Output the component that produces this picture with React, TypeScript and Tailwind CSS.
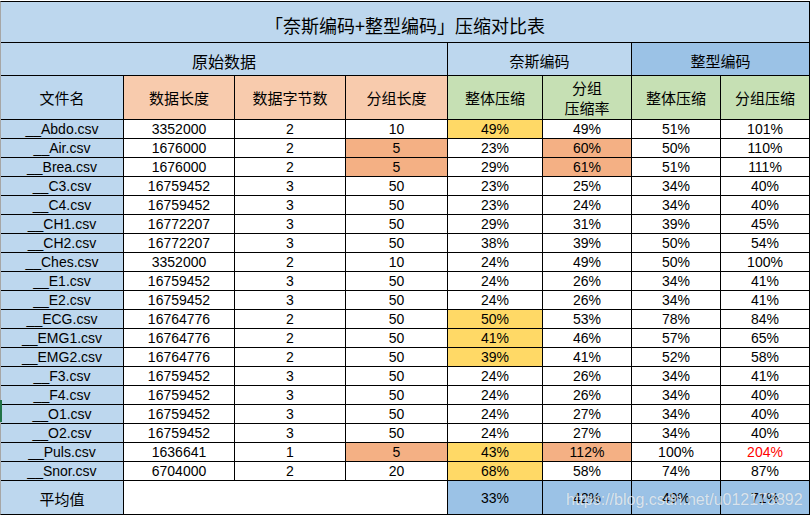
import React from 'react'

type Tone = 'y' | 'o' | undefined

type Row = {
  name: string
  len: string
  bytes: string
  group: string
  groupTone?: Tone
  niceAll: string
  niceAllTone?: Tone
  niceGroup: string
  niceGroupTone?: Tone
  intAll: string
  intGroup: string
  red?: boolean
}

const rows: Row[] = [
  { name: '__Abdo.csv', len: '3352000', bytes: '2', group: '10', niceAll: '49%', niceAllTone: 'y', niceGroup: '49%', intAll: '51%', intGroup: '101%' },
  { name: '__Air.csv', len: '1676000', bytes: '2', group: '5', groupTone: 'o', niceAll: '23%', niceGroup: '60%', niceGroupTone: 'o', intAll: '50%', intGroup: '110%' },
  { name: '__Brea.csv', len: '1676000', bytes: '2', group: '5', groupTone: 'o', niceAll: '29%', niceGroup: '61%', niceGroupTone: 'o', intAll: '51%', intGroup: '111%' },
  { name: '__C3.csv', len: '16759452', bytes: '3', group: '50', niceAll: '23%', niceGroup: '25%', intAll: '34%', intGroup: '40%' },
  { name: '__C4.csv', len: '16759452', bytes: '3', group: '50', niceAll: '23%', niceGroup: '24%', intAll: '34%', intGroup: '40%' },
  { name: '__CH1.csv', len: '16772207', bytes: '3', group: '50', niceAll: '29%', niceGroup: '31%', intAll: '39%', intGroup: '45%' },
  { name: '__CH2.csv', len: '16772207', bytes: '3', group: '50', niceAll: '38%', niceGroup: '39%', intAll: '50%', intGroup: '54%' },
  { name: '__Ches.csv', len: '3352000', bytes: '2', group: '10', niceAll: '24%', niceGroup: '49%', intAll: '50%', intGroup: '100%' },
  { name: '__E1.csv', len: '16759452', bytes: '3', group: '50', niceAll: '24%', niceGroup: '26%', intAll: '34%', intGroup: '41%' },
  { name: '__E2.csv', len: '16759452', bytes: '3', group: '50', niceAll: '24%', niceGroup: '26%', intAll: '34%', intGroup: '41%' },
  { name: '__ECG.csv', len: '16764776', bytes: '2', group: '50', niceAll: '50%', niceAllTone: 'y', niceGroup: '53%', intAll: '78%', intGroup: '84%' },
  { name: '__EMG1.csv', len: '16764776', bytes: '2', group: '50', niceAll: '41%', niceAllTone: 'y', niceGroup: '46%', intAll: '57%', intGroup: '65%' },
  { name: '__EMG2.csv', len: '16764776', bytes: '2', group: '50', niceAll: '39%', niceAllTone: 'y', niceGroup: '41%', intAll: '52%', intGroup: '58%' },
  { name: '__F3.csv', len: '16759452', bytes: '3', group: '50', niceAll: '24%', niceGroup: '26%', intAll: '34%', intGroup: '41%' },
  { name: '__F4.csv', len: '16759452', bytes: '3', group: '50', niceAll: '24%', niceGroup: '26%', intAll: '34%', intGroup: '40%' },
  { name: '__O1.csv', len: '16759452', bytes: '3', group: '50', niceAll: '24%', niceGroup: '27%', intAll: '34%', intGroup: '40%' },
  { name: '__O2.csv', len: '16759452', bytes: '3', group: '50', niceAll: '24%', niceGroup: '27%', intAll: '34%', intGroup: '40%' },
  { name: '__Puls.csv', len: '1636641', bytes: '1', group: '5', groupTone: 'o', niceAll: '43%', niceAllTone: 'y', niceGroup: '112%', niceGroupTone: 'o', intAll: '100%', intGroup: '204%', red: true },
  { name: '__Snor.csv', len: '6704000', bytes: '2', group: '20', niceAll: '68%', niceAllTone: 'y', niceGroup: '58%', intAll: '74%', intGroup: '87%' },
]

const cjk = "font-['Noto_Sans_CJK_SC',sans-serif]"
const latin = "font-['Liberation_Sans','Noto_Sans_CJK_SC',sans-serif]"

// 数据单元格：文字略靠下，跟 Excel 一样
function Cell({ children, tone, className = '' }: { children: React.ReactNode; tone?: Tone; className?: string }) {
  const bg = tone === 'y' ? 'bg-[#ffd966]' : tone === 'o' ? 'bg-[#f4b084]' : 'bg-white'
  return (
    <div className={`${bg} ${latin} text-[14px] leading-[17px] pt-px text-center text-black whitespace-nowrap ${className}`}>
      {children}
    </div>
  )
}

function Head({ children, className = '' }: { children: React.ReactNode; className?: string }) {
  return (
    <div className={`flex items-center justify-center text-center text-black ${cjk} text-[15px] leading-[20px] ${className}`}>
      {children}
    </div>
  )
}

export default function App() {
  return (
    <div className="relative w-[811px] h-[518px] bg-white overflow-hidden">
      <div className="pt-px">
        <div className="w-[810px] bg-black border-l border-l-[#a6a6a6] border-r border-r-black border-t border-t-black border-b border-b-black grid grid-cols-[122px_110px_110px_101px_94px_88px_88px_88px] grid-rows-[40px_32px_43px_repeat(19,18px)_33px] gap-px">
          <Head className="col-span-8 bg-[#bdd7ee] text-[18px] pt-[5px]">「奈斯编码+整型编码」压缩对比表</Head>

          <Head className="col-span-4 bg-[#bdd7ee] text-[16px] pt-[3px]">原始数据</Head>
          <Head className="col-span-2 bg-[#bdd7ee] pt-[3px]">奈斯编码</Head>
          <Head className="col-span-2 bg-[#9bc2e6] pt-[3px]">整型编码</Head>

          <Head className="bg-[#bdd7ee]">文件名</Head>
          <Head className="bg-[#f8cbad]">数据长度</Head>
          <Head className="bg-[#f8cbad]">数据字节数</Head>
          <Head className="bg-[#f8cbad]">分组长度</Head>
          <Head className="bg-[#c6e0b4]">整体压缩</Head>
          <Head className="bg-[#c6e0b4] flex-col">
            <span>分组</span>
            <span>压缩率</span>
          </Head>
          <Head className="bg-[#c6e0b4]">整体压缩</Head>
          <Head className="bg-[#c6e0b4]">分组压缩</Head>

          {rows.map((r) => (
            <React.Fragment key={r.name}>
              <Cell className="!bg-[#bdd7ee]">{r.name}</Cell>
              <Cell>{r.len}</Cell>
              <Cell>{r.bytes}</Cell>
              <Cell tone={r.groupTone}>{r.group}</Cell>
              <Cell tone={r.niceAllTone}>{r.niceAll}</Cell>
              <Cell tone={r.niceGroupTone}>{r.niceGroup}</Cell>
              <Cell>{r.intAll}</Cell>
              <Cell className={r.red ? '!text-[#ff0000]' : ''}>{r.intGroup}</Cell>
            </React.Fragment>
          ))}

          <Head className="bg-[#bdd7ee] pt-[2px]">平均值</Head>
          <div className="col-span-3 bg-white" />
          {['33%', '42%', '49%', '71%'].map((v, i) => (
            <div key={i} className={`flex items-center justify-center pt-[2px] bg-[#9bc2e6] ${latin} text-[14px] text-black`}>
              {v}
            </div>
          ))}
        </div>
      </div>

      {/* Excel 选中行的绿色标记 */}
      <div className="absolute left-0 top-[400px] w-[2px] h-[22px] bg-[#217346]" />

      {/* 水印 */}
      <div className={`absolute left-[566px] top-[490px] ${latin} text-[16px] leading-[20px] text-white/70 whitespace-nowrap [text-shadow:0_0_1px_rgba(0,0,0,0.15)]`}>
        https://blog.csdn.net/u012173892
      </div>
    </div>
  )
}
